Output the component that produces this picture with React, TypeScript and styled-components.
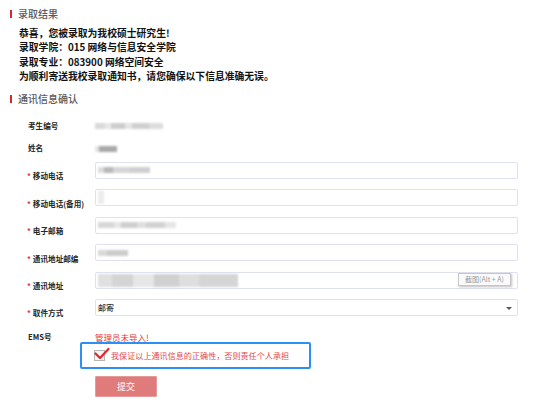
import React from "react";
import styled, { createGlobalStyle } from "styled-components";

const GlobalStyle = createGlobalStyle`
  html, body { margin: 0; padding: 0; background: #fff; }
  body { font-family: "Noto Sans CJK SC", "Noto Sans", sans-serif; }
  * { box-sizing: border-box; }
`;

const Page = styled.div`
  width: 554px;
  height: 411px;
  overflow: hidden;
  padding-top: 6px;
  background: #fff;
`;

const SectionTitle = styled.div<{ $mt?: number }>`
  display: flex;
  align-items: center;
  gap: 6px;
  height: 15px;
  margin-top: ${(p) => p.$mt ?? 0}px;
  padding-left: 10px;
  font-size: 10px;
  line-height: 15px;
  font-weight: 500;
  color: #595959;
  &::before {
    content: "";
    width: 2px;
    height: 8px;
    background: #d7262d;
  }
`;

const Intro = styled.div`
  margin-top: 5px;
  padding-left: 19px;
  font-size: 9.8px;
  line-height: 14.3px;
  font-weight: 700;
  color: #111;
`;

const Form = styled.div`
  margin-top: 8.5px;
  display: flex;
  flex-direction: column;
`;

const InfoRow = styled.div`
  display: flex;
  align-items: center;
  height: 22px;
  padding-left: 27px;
`;

const FieldRow = styled.div`
  display: flex;
  align-items: flex-start;
  height: 27.5px;
  padding-left: 27px;
  padding-top: 3px;
`;

const Label = styled.div<{ $pt?: number; $lh?: number }>`
  width: 68px;
  flex: none;
  padding-top: ${(p) => p.$pt ?? 0}px;
  padding-left: 1px;
  font-size: 7.6px;
  line-height: ${(p) => p.$lh ?? 11}px;
  font-weight: 700;
  color: #262626;
  white-space: nowrap;
`;

const Star = styled.span`
  color: #e2312f;
  margin-left: -1px;
  margin-right: 2px;
`;

const Input = styled.div`
  position: relative;
  display: flex;
  align-items: center;
  width: 423px;
  height: 17px;
  padding-left: 2px;
  border: 1px solid #dfe1f0;
  border-radius: 2px;
  background: #fff;
  font-size: 8px;
  color: #333;
`;

const SelectText = styled.span`
  font-size: 8px;
  font-weight: 500;
`;

const Caret = styled.span`
  position: absolute;
  right: 5px;
  top: 7px;
  width: 0;
  height: 0;
  border-left: 3px solid transparent;
  border-right: 3px solid transparent;
  border-top: 3px solid #555;
`;

const BlurValue = styled.div<{ $w: number; $h: number; $bg: string; $mt?: number }>`
  width: ${(p) => p.$w}px;
  height: ${(p) => p.$h}px;
  margin-top: ${(p) => p.$mt ?? 0}px;
  background: ${(p) => p.$bg};
  filter: blur(1.1px);
`;

const Tooltip = styled.div`
  position: absolute;
  right: 6px;
  top: 0px;
  width: 53px;
  height: 13px;
  display: flex;
  align-items: center;
  justify-content: center;
  border: 1px solid #c6c6c6;
  background: #fafafa;
  box-shadow: 1px 1px 2px rgba(0, 0, 0, 0.25);
  font-size: 7px;
  color: #9a9a9a;
  white-space: nowrap;
`;

const EmsRow = styled.div`
  display: flex;
  align-items: flex-start;
  height: 18px;
  padding-left: 27px;
  padding-top: 8px;
`;

const WarnText = styled.div`
  font-size: 8.5px;
  line-height: 10px;
  color: #e0373c;
`;

const AgreeBox = styled.div`
  display: flex;
  align-items: center;
  gap: 6px;
  margin-left: 80px;
  width: 231px;
  height: 27px;
  padding-left: 12px;
  border: 2px solid #2b8ff5;
  border-radius: 2px;
`;

const CheckWrap = styled.div`
  position: relative;
  width: 11px;
  height: 11px;
  flex: none;
  border: 1px solid #b5b5b5;
  background: #f4f4f4;
`;

const CheckMark = styled.svg`
  position: absolute;
  left: 0px;
  top: -3px;
  width: 14px;
  height: 12px;
  overflow: visible;
`;

const AgreeText = styled.span`
  font-size: 8.1px;
  color: #e04a4f;
  white-space: nowrap;
`;

const Submit = styled.button`
  margin-top: 7px;
  margin-left: 95px;
  width: 62px;
  height: 21px;
  padding: 0;
  border: 1px solid #e79a9a;
  background: #e07b7b;
  color: #fff;
  font-family: "Noto Sans CJK SC", sans-serif;
  font-size: 9px;
  border-radius: 1px;
`;

const g1 =
  "linear-gradient(90deg, #d9d9d9 0 14%, #e8e8e8 14% 24%, #cdcdcd 24% 44%, #e4e4e4 44% 54%, #cfcfcf 54% 80%, #dcdcdc 80%)";
const g2 = "linear-gradient(90deg, #e4e4e4 0 18%, #a9a9a9 18% 100%)";
const g3 =
  "linear-gradient(90deg, #dcdcdc 0 12%, #b8b8b8 12% 28%, #d6d6d6 28% 60%, #cfcfcf 60% 100%)";
const g4 =
  "linear-gradient(90deg, #d7d7d7 0 20%, #e6e6e6 20% 30%, #cfcfcf 30% 50%, #dedede 50% 62%, #d2d2d2 62% 86%, #e6e6e6 86%)";
const g5 = "linear-gradient(90deg, #d8d8d8 0 30%, #cccccc 30% 100%)";
const g6 =
  "linear-gradient(90deg, #e0e0e0 0 10%, #d4d4d4 10% 25%, #e6e6e6 25% 40%, #d0d0d0 40% 58%, #dedede 58% 72%, #d5d5d5 72% 100%)";

export default function App() {
  return (
    <>
      <GlobalStyle />
      <Page>
        <SectionTitle>录取结果</SectionTitle>
        <Intro>
          <div>恭喜，您被录取为我校硕士研究生!</div>
          <div>录取学院：015 网络与信息安全学院</div>
          <div>录取专业：083900 网络空间安全</div>
          <div>为顺利寄送我校录取通知书，请您确保以下信息准确无误。</div>
        </Intro>
        <SectionTitle $mt={8}>通讯信息确认</SectionTitle>
        <Form>
          <InfoRow>
            <Label>考生编号</Label>
            <BlurValue $w={68} $h={6} $bg={g1} />
          </InfoRow>
          <InfoRow>
            <Label>姓名</Label>
            <BlurValue $w={22} $h={6} $bg={g2} $mt={2} />
          </InfoRow>
          <FieldRow>
            <Label $pt={8.5}>
              <Star>*</Star>移动电话
            </Label>
            <Input>
              <BlurValue $w={52} $h={6} $bg={g3} />
            </Input>
          </FieldRow>
          <FieldRow>
            <Label $pt={8.5}>
              <Star>*</Star>移动电话(备用)
            </Label>
            <Input>
              <BlurValue $w={6} $h={13} $bg="#ececec" />
            </Input>
          </FieldRow>
          <FieldRow>
            <Label $pt={8.5}>
              <Star>*</Star>电子邮箱
            </Label>
            <Input>
              <BlurValue $w={78} $h={6} $bg={g4} />
            </Input>
          </FieldRow>
          <FieldRow>
            <Label $pt={8.5}>
              <Star>*</Star>通讯地址邮编
            </Label>
            <Input>
              <BlurValue $w={30} $h={6} $bg={g5} />
            </Input>
          </FieldRow>
          <FieldRow>
            <Label $pt={8.5}>
              <Star>*</Star>通讯地址
            </Label>
            <Input>
              <BlurValue $w={140} $h={13} $bg={g6} />
              <Tooltip>截图(Alt + A)</Tooltip>
            </Input>
          </FieldRow>
          <FieldRow>
            <Label $pt={8}>
              <Star>*</Star>取件方式
            </Label>
            <Input>
              <SelectText>邮寄</SelectText>
              <Caret />
            </Input>
          </FieldRow>
          <EmsRow>
            <Label $lh={10}>EMS号</Label>
            <WarnText>管理员未导入!</WarnText>
          </EmsRow>
          <AgreeBox>
            <CheckWrap>
              <CheckMark viewBox="0 0 14 12">
                <path
                  d="M0.5 5.5 L5 10 L13.5 1"
                  fill="none"
                  stroke="#e0262d"
                  strokeWidth="2.2"
                  strokeLinecap="round"
                  strokeLinejoin="round"
                />
              </CheckMark>
            </CheckWrap>
            <AgreeText>我保证以上通讯信息的正确性，否则责任个人承担</AgreeText>
          </AgreeBox>
          <Submit>提交</Submit>
        </Form>
      </Page>
    </>
  );
}
